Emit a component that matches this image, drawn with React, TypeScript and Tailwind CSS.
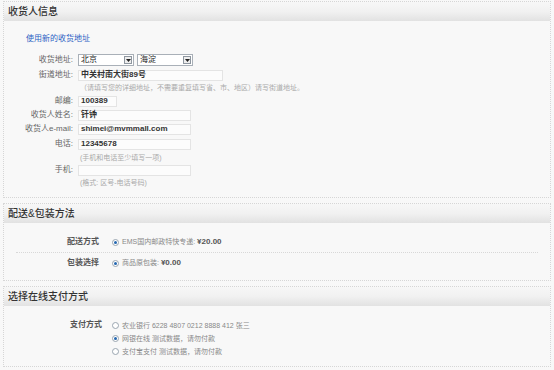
import React from 'react'

const font = { fontFamily: '"Liberation Sans", "Noto Sans CJK SC", sans-serif' }

function Panel({ title, className, children }: { title: string; className: string; children: React.ReactNode }) {
    return (
        <div className={`mx-[3px] border border-dotted border-[#d6d6d6] bg-[#f8f8f8] ${className}`}>
            <div className="h-[19px] flex items-center pl-[4px] bg-gradient-to-b from-[#f7f7f7] via-[#f1f1f1] to-[#e2e2e2]">
                <span className="text-[10px] font-medium text-[#333] leading-none">{title}</span>
            </div>
            {children}
        </div>
    )
}

function Field({ label, children, className = '' }: { label: string; children?: React.ReactNode; className?: string }) {
    return (
        <div className={`flex items-center h-[12px] ${className}`}>
            <span className="w-[70px] text-right text-[8px] text-[#666] leading-none pr-[1px]">{label}</span>
            <div className="ml-[4px] flex items-center h-full">{children}</div>
        </div>
    )
}

function Input({ value = '', w }: { value?: string; w: string }) {
    return (
        <div className={`h-[11px] ${w} border border-[#e4e4e4] bg-[#fcfcfc] flex items-center pl-[2px]`}>
            <span className="text-[8px] font-bold text-[#333] leading-none">{value}</span>
        </div>
    )
}

function Select({ value }: { value: string }) {
    return (
        <div className="h-[12px] w-[56px] border border-[#a9b0b8] bg-white flex items-center justify-between pl-[2px] pr-[1px]">
            <span className="text-[8px] text-[#222] leading-none">{value}</span>
            <span className="w-[8px] h-[8px] border border-[#8e969f] bg-[#eee] flex items-center justify-center">
                <svg width="5" height="3" viewBox="0 0 5 3"><path d="M0 0h5L2.5 3z" fill="#222" /></svg>
            </span>
        </div>
    )
}

function Hint({ text, className = '' }: { text: string; className?: string }) {
    return (
        <div className={`pl-[76px] h-[9px] flex items-center text-[7px] text-[#aaa] leading-none ${className}`}>{text}</div>
    )
}

function Radio({ checked }: { checked?: boolean }) {
    return (
        <span className="w-[7px] h-[7px] rounded-full border border-[#9aa5b0] bg-white flex items-center justify-center shrink-0">
            {checked && <span className="w-[3px] h-[3px] rounded-full bg-[#2467b0]" />}
        </span>
    )
}

export default function App() {
    return (
        <div className="w-[554px] h-[370px] bg-[#f8f8f8] pt-[1px] overflow-hidden" style={font}>
            <Panel title="收货人信息" className="h-[197px]">
                <div className="pl-[22px] mt-[14px] text-[8px] text-[#2c5fc4] leading-none h-[10px]">使用新的收货地址</div>
                <Field label="收货地址:" className="mt-[9px]">
                    <Select value="北京" />
                    <span className="w-[3px]" />
                    <Select value="海淀" />
                </Field>
                <Field label="街道地址:" className="mt-[3px]">
                    <Input w="w-[145px]" value="中关村南大街89号" />
                </Field>
                <Hint className="mt-[2px]" text="（请填写您的详细地址，不需要重复填写省、市、地区）请写街道地址。" />
                <Field label="邮编:" className="mt-[3px]">
                    <Input w="w-[39px]" value="100389" />
                </Field>
                <Field label="收货人姓名:" className="mt-[2px]">
                    <Input w="w-[113px]" value="钎钟" />
                </Field>
                <Field label="收货人e-mail:" className="mt-[2px]">
                    <Input w="w-[113px]" value="shimei@mvmmall.com" />
                </Field>
                <Field label="电话:" className="mt-[3px]">
                    <Input w="w-[113px]" value="12345678" />
                </Field>
                <Hint className="mt-[3px]" text="(手机和电话至少填写一项)" />
                <Field label="手机:" className="mt-[2px]">
                    <Input w="w-[113px]" />
                </Field>
                <Hint className="mt-[2px]" text="(格式: 区号-电话号码)" />
            </Panel>

            <Panel title="配送&包装方法" className="h-[78px] mt-[5px]">
                <div className="mt-[13px] flex items-center h-[12px]">
                    <span className="w-[95px] text-right text-[8px] font-bold text-[#555] leading-none">配送方式</span>
                    <span className="ml-[13px]"><Radio checked /></span>
                    <span className="ml-[3px] text-[7px] text-[#888] leading-none">EMS国内邮政特快专递: <b className="text-[8px] text-[#555]">¥20.00</b></span>
                </div>
                <div className="mx-[12px] mt-[4px] border-t border-dotted border-[#d8d8d8]" />
                <div className="mt-[4px] flex items-center h-[12px]">
                    <span className="w-[95px] text-right text-[8px] font-bold text-[#555] leading-none">包装选择</span>
                    <span className="ml-[13px]"><Radio checked /></span>
                    <span className="ml-[3px] text-[7px] text-[#888] leading-none">商品原包装: <b className="text-[8px] text-[#555]">¥0.00</b></span>
                </div>
            </Panel>

            <Panel title="选择在线支付方式" className="h-[81px] mt-[5px]">
                <div className="mt-[13px] flex">
                    <span className="w-[98px] text-right text-[8px] font-bold text-[#555] leading-[12px]">支付方式</span>
                    <div className="ml-[10px] flex flex-col gap-[1px]">
                        <div className="flex items-center h-[12px]">
                            <Radio />
                            <span className="ml-[3px] text-[7px] text-[#888] leading-none">农业银行 6228 4807 0212 8888 412 张三</span>
                        </div>
                        <div className="flex items-center h-[12px]">
                            <Radio checked />
                            <span className="ml-[3px] text-[7px] text-[#888] leading-none">网银在线 测试数据，请勿付款</span>
                        </div>
                        <div className="flex items-center h-[12px]">
                            <Radio />
                            <span className="ml-[3px] text-[7px] text-[#888] leading-none">支付宝支付 测试数据，请勿付款</span>
                        </div>
                    </div>
                </div>
            </Panel>
        </div>
    )
}
